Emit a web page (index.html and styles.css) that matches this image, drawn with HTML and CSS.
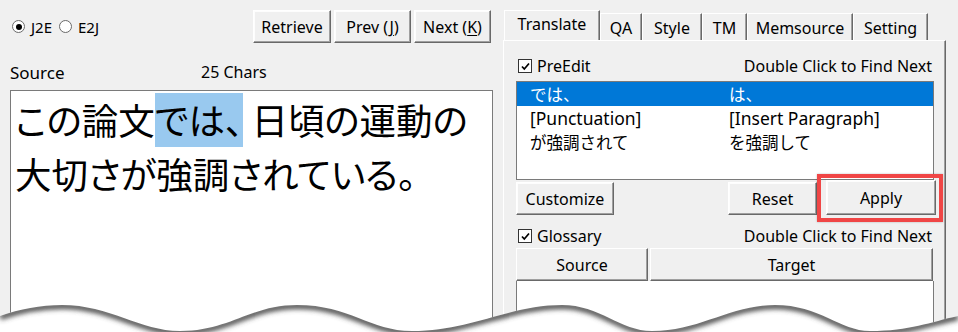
FILE: index.html
```html
<!DOCTYPE html>
<html lang="ja">
<head>
<meta charset="utf-8">
<title>Translate</title>
<link rel="stylesheet" href="styles.css">
</head>
<body>
<div class="app">
  <div class="left">
    <div class="topbar">
      <div class="radios">
        <span class="radio"><span class="rb on"></span>J2E</span>
        <span class="radio"><span class="rb"></span>E2J</span>
      </div>
      <div class="btns">
        <button class="btn b-ret">Retrieve</button>
        <button class="btn b-nav">Prev (<u>J</u>)</button>
        <button class="btn b-nav">Next (<u>K</u>)</button>
      </div>
    </div>
    <div class="srcrow"><span class="srclabel">Source</span><span class="chars">25 Chars</span></div>
    <div class="srcbox">この論文<span class="sel">では、</span> 日頃の運動の<br>大切さが強調されている。</div>
  </div>
  <div class="right">
    <div class="tabs">
      <div class="tab active t-tr">Translate</div>
      <div class="tab t-qa">QA</div>
      <div class="tab t-st">Style</div>
      <div class="tab t-tm">TM</div>
      <div class="tab t-ms">Memsource</div>
      <div class="tab t-se">Setting</div>
    </div>
    <div class="panel">
      <div class="chkrow">
        <span class="chk"><span class="cb"><svg width="11" height="11" viewBox="0 0 11 11"><path d="M2 5.5 L4.3 8 L9 2.5" fill="none" stroke="#000" stroke-width="1.7"/></svg></span>PreEdit</span>
        <span class="hint">Double Click to Find Next</span>
      </div>
      <div class="list">
        <div class="row selected"><span class="c1 ja">では、</span><span class="c2 ja">は、</span></div>
        <div class="row"><span class="c1">[Punctuation]</span><span class="c2">[Insert Paragraph]</span></div>
        <div class="row"><span class="c1 ja">が強調されて</span><span class="c2 ja">を強調して</span></div>
      </div>
      <div class="btnrow">
        <button class="btn b-cus">Customize</button>
        <div class="spacer"></div>
        <button class="btn b-reset">Reset</button>
        <div class="mark"><button class="btn b-apply">Apply</button></div>
      </div>
      <div class="chkrow glrow">
        <span class="chk"><span class="cb"><svg width="11" height="11" viewBox="0 0 11 11"><path d="M2 5.5 L4.3 8 L9 2.5" fill="none" stroke="#000" stroke-width="1.7"/></svg></span>Glossary</span>
        <span class="hint">Double Click to Find Next</span>
      </div>
      <div class="hdr">
        <div class="hcell h-src">Source</div>
        <div class="hcell h-tgt">Target</div>
      </div>
      <div class="glist"></div>
    </div>
  </div>
</div>
<svg class="tear" width="958" height="40" viewBox="0 292 958 40">
  <defs>
    <clipPath id="below"><path d="M0,316 C20,309 40,305 62,305 C110,305 140,331 180,331 C230,331 250,305 297,305 C350,305 370,331 412,331 C470,331 510,305 562,305 C600,305 620,331 652,331 C700,331 730,305 775,305 C820,305 840,331 870,331 C910,331 930,322 958,316 L958,340 L0,340 Z"/></clipPath>
    <filter id="blur" x="-5%" y="-100%" width="110%" height="300%"><feGaussianBlur stdDeviation="2.6"/></filter>
  </defs>
  <path d="M0,316 C20,309 40,305 62,305 C110,305 140,331 180,331 C230,331 250,305 297,305 C350,305 370,331 412,331 C470,331 510,305 562,305 C600,305 620,331 652,331 C700,331 730,305 775,305 C820,305 840,331 870,331 C910,331 930,322 958,316 L958,340 L0,340 Z" fill="#fff"/>
  <g clip-path="url(#below)">
    <path d="M0,316 C20,309 40,305 62,305 C110,305 140,331 180,331 C230,331 250,305 297,305 C350,305 370,331 412,331 C470,331 510,305 562,305 C600,305 620,331 652,331 C700,331 730,305 775,305 C820,305 840,331 870,331 C910,331 930,322 958,316" fill="none" stroke="#4a4a4a" stroke-width="6" filter="url(#blur)" transform="translate(0,1)"/>
  </g>
</svg>
</body>
</html>
```

FILE: styles.css
```css
* { box-sizing: border-box; margin: 0; padding: 0; }
html, body { width: 958px; height: 332px; overflow: hidden; }
body {
  background: #f0f0f0;
  font-family: "Noto Sans", "Noto Sans CJK JP", sans-serif;
  font-size: 16px;
  color: #000;
  position: relative;
}
.ja { font-family: "Noto Sans CJK JP", sans-serif; }
.app { display: flex; gap: 10px; padding-left: 10px; height: 380px; }

/* left */
.left { width: 483px; display: flex; flex-direction: column; }
.topbar { display: flex; justify-content: space-between; align-items: center; margin-top: 10px; height: 33px; }
.radios { display: flex; align-items: center; gap: 7px; padding-left: 2px; }
.radio { display: flex; align-items: center; gap: 6px; font-size: 15px; }
.rb { width: 13px; height: 13px; border-radius: 50%; border: 1px solid #6a6a6a; background: #fff; display: flex; align-items: center; justify-content: center; }
.rb.on::after { content: ""; width: 6px; height: 6px; border-radius: 50%; background: #000; }
.btns { display: flex; gap: 3px; margin-right: 2px; }
.btn {
  height: 33px;
  font: inherit;
  font-size: 16px;
  color: #000;
  background: #f0f0f0;
  border: 1px solid;
  border-color: #fff #696969 #696969 #fff;
  box-shadow: inset -1px -1px 0 #a0a0a0, inset 1px 1px 0 #fdfdfd;
}
.btn u { text-decoration: underline; text-underline-offset: 2px; }
.b-ret { width: 78px; }
.b-nav { width: 77px; }
.srcrow { display: flex; align-items: center; height: 20px; margin-top: 19px; margin-bottom: 8px; }
.srclabel { font-size: 17px; width: 191px; }
.chars { font-size: 16px; }
.srcbox {
  flex: 1;
  background: #fff;
  border: 1px solid #7a7a7a;
  padding: 2px 4px;
  font-family: "Noto Sans CJK JP", sans-serif;
  font-feature-settings: "palt";
  font-size: 36.5px;
  line-height: 54px;
}
.sel { display: inline-block; background: #99c9ef; line-height: 54px; }

/* right */
.right { width: 443px; display: flex; flex-direction: column; }
.tabs { display: flex; align-items: flex-end; height: 30px; margin-top: 10px; padding-left: 1px; }
.tab {
  height: 27px;
  display: flex; align-items: center; justify-content: center;
  font-size: 16px;
  border-top: 1px solid #fff;
  border-left: 1px solid #fff;
  border-right: 1px solid #696969;
  box-shadow: inset -1px 0 0 #a0a0a0;
  padding-top: 1px;
}
.tab.active { height: 30px; padding-top: 0; padding-bottom: 3px; }
.t-tr { width: 96px; }
.t-qa { width: 42px; }
.t-st { width: 60px; }
.t-tm { width: 45px; }
.t-ms { width: 106px; }
.t-se { width: 75px; }
.panel {
  flex: 1;
  border-top: 1px solid #fff;
  border-left: 1px solid #fff;
  border-right: 1px solid #696969;
  box-shadow: inset -1px 0 0 #a0a0a0;
  padding: 0 11px 0 12px;
  display: flex; flex-direction: column;
}
.chkrow { display: flex; justify-content: space-between; align-items: center; height: 20px; margin-top: 15px; }
.chk { display: flex; align-items: center; gap: 5px; padding-left: 2px; font-size: 16px; }
.cb { width: 14px; height: 14px; border: 1px solid #333; background: #fff; display: flex; align-items: center; justify-content: center; }
.hint { font-size: 16px; margin-right: 2px; }
.list { margin-top: 5px; height: 99px; border: 1px solid #7a7a7a; background: #fff; }
.row { display: grid; grid-template-columns: 212px 1fr; height: 24px; align-items: center; font-size: 17.5px; }
.row .ja { font-size: 16.5px; }
.row .c1 { padding-left: 13px; }
.row.selected { background: #0078d7; color: #fff; }
.btnrow { display: flex; align-items: flex-end; height: 35px; }
.b-cus { width: 98px; }
.spacer { flex: 1; }
.b-reset { width: 89px; }
.mark { position: relative; margin-left: 9px; margin-right: -2px; }
.b-apply { width: 110px; height: 35px; display: block; }
.mark::after {
  content: "";
  position: absolute;
  left: -9px; right: -7px; top: -6px; bottom: -7px;
  border: 4px solid #f04646;
  box-shadow: 0 0 2px rgba(0,0,0,0.25);
  pointer-events: none;
}
.glrow { margin-top: 11px; }
.hdr { display: flex; gap: 2px; margin-top: 2px; height: 33px; margin-right: 1px; }
.hcell {
  display: flex; align-items: center; justify-content: center;
  font-size: 16px;
  background: #f0f0f0;
  border: 1px solid;
  border-color: #fff #696969 #696969 #fff;
  box-shadow: inset -1px -1px 0 #a0a0a0;
}
.h-src { width: 132px; }
.h-tgt { flex: 1; }
.glist { flex: 1; background: #fff; border: 1px solid #7a7a7a; border-top: none; }

.tear { position: absolute; left: 0; bottom: 0; display: block; }
```
